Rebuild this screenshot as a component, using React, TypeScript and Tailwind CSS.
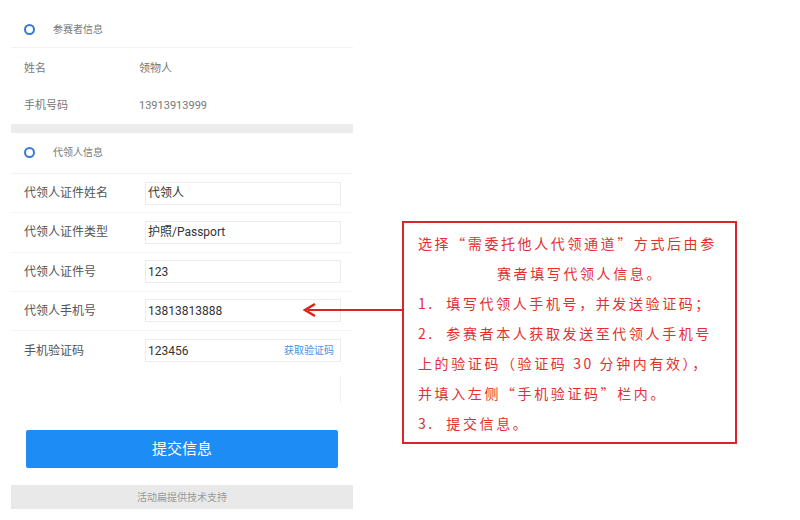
const FONT = "font-['Roboto','Noto_Sans_CJK_SC',sans-serif]";

function SectionHeader({ title, top }: { title: string; top?: boolean }) {
  return (
    <div
      className={`flex items-center border-b border-[#f2f2f2] ${top ? "h-[48px] pt-[11px]" : "h-[41px] pb-[1px]"}`}
    >
      <span className="ml-[13px] box-border h-[11px] w-[11px] rounded-full border-[2.5px] border-[#3a78d6]" />
      <span className="ml-[18px] text-[10px] text-[#777]">{title}</span>
    </div>
  );
}

function InfoRow({ label, value }: { label: string; value: string }) {
  return (
    <div className="flex h-[37px] items-center pt-[5px] text-[11px] text-[#777]">
      <span className="ml-[13px] w-[115px]">{label}</span>
      <span>{value}</span>
    </div>
  );
}

function FieldRow({
  label,
  value,
  action,
  last,
}: {
  label: string;
  value: string;
  action?: string;
  last?: boolean;
}) {
  return (
    <div
      className={`flex h-[39.25px] items-center ${last ? "" : "border-b border-[#f4f4f4]"}`}
    >
      <span className="ml-[13px] w-[121px] text-[12px] text-[#555]">{label}</span>
      <div className="flex h-[23px] w-[196px] items-center justify-between border border-[#ececec] pl-[2px] pr-[6px]">
        <span className="text-[12px] text-[#333]">{value}</span>
        {action && <span className="text-[10px] text-[#4a90e2]">{action}</span>}
      </div>
    </div>
  );
}

const NOTES = [
  { text: "选择“需委托他人代领通道”方式后由参", indent: false },
  { text: "赛者填写代领人信息。", indent: true },
  { text: "1.  填写代领人手机号，并发送验证码；", indent: false },
  { text: "2.  参赛者本人获取发送至代领人手机号", indent: false },
  { text: "上的验证码（验证码 30 分钟内有效），", indent: false },
  { text: "并填入左侧“手机验证码”栏内。", indent: false },
  { text: "3.  提交信息。", indent: false },
];

export default function App() {
  return (
    <div className={`relative flex h-[520px] w-[800px] bg-white ${FONT}`}>
      {/* Phone form */}
      <div className="ml-[11px] flex w-[342px] flex-col">
        <SectionHeader title="参赛者信息" top />
        <InfoRow label="姓名" value="领物人" />
        <InfoRow label="手机号码" value="13913913999" />
        <div className="mt-[2px] h-[9px] bg-[#ececec]" />

        <SectionHeader title="代领人信息" />
        <FieldRow label="代领人证件姓名" value="代领人" />
        <FieldRow label="代领人证件类型" value="护照/Passport" />
        <FieldRow label="代领人证件号" value="123" />
        <FieldRow label="代领人手机号" value="13813813888" />
        <FieldRow label="手机验证码" value="123456" action="获取验证码" last />

        <div className="flex h-[40px] items-center justify-end pr-[12px]">
          <div className="h-[26px] w-[196px] border-r border-[#f0f0f0]" />
        </div>

        <button className="mx-[15px] mt-[20px] h-[38px] rounded-[2px] bg-[#1d8cf5] text-[15px] text-white">
          提交信息
        </button>

        <div className="mt-[17px] flex h-[24px] items-center justify-center bg-[#e9e9e9] text-[10px] text-[#999]">
          活动扁提供技术支持
        </div>
      </div>

      {/* Annotation */}
      <div
        lang="zh-CN"
        className="ml-[49px] mt-[221px] box-border h-[223px] w-[335px] border-2 border-[#d8262c] pl-[14px] pt-[5px] font-['Noto_Sans_CJK_SC',sans-serif]"
      >
        {NOTES.map((n) => (
          <div
            key={n.text}
            className={`h-[30px] whitespace-pre text-[14px] leading-[30px] tracking-[2.6px] text-[#e2302f] ${n.indent ? "pl-[79px]" : ""}`}
          >
            {n.text}
          </div>
        ))}
      </div>

      <svg
        className="absolute left-[302px] top-[302px]"
        width="102"
        height="16"
        viewBox="0 0 102 16"
      >
        <line x1="6" y1="8" x2="102" y2="8" stroke="#e0201f" strokeWidth="2" />
        <path d="M13 2 L3 8 L13 14" fill="none" stroke="#e0201f" strokeWidth="2.5" strokeLinejoin="miter" />
      </svg>
    </div>
  );
}
